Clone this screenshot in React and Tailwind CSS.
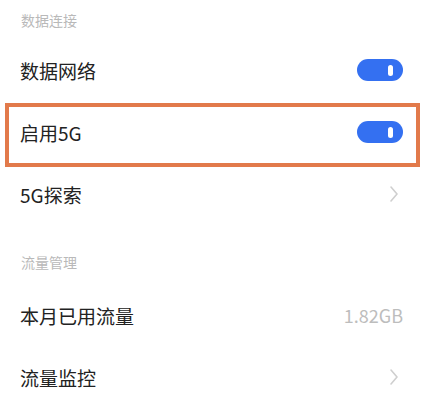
import React from "react";

const font = { fontFamily: '"Noto Sans CJK SC", "Noto Sans", sans-serif' };

function Toggle() {
  return (
    <div className="w-[46px] h-[22px] rounded-full bg-[#3470f1] flex items-center justify-end pr-[10px]">
      <div className="w-[5px] h-[11px] rounded-full bg-white" />
    </div>
  );
}

function Chevron() {
  return (
    <svg width="10" height="18" viewBox="0 0 10 18" className="mr-[4px]">
      <path d="M2 2 L8 9 L2 16" fill="none" stroke="#cfcfcf" strokeWidth="1.6" strokeLinecap="round" strokeLinejoin="round" />
    </svg>
  );
}

function Row({ label, right, highlight }) {
  return (
    <div className="relative h-[62px] flex items-center justify-between pl-[20px] pr-[22px]">
      <span className="text-[19px] text-[#222222] leading-none">{label}</span>
      {right}
      {highlight && (
        <div className="absolute left-[5px] right-[5px] top-[2px] bottom-[-4px] border-[4px] border-[#e27a4b]" />
      )}
    </div>
  );
}

export default function App() {
  return (
    <div className="w-[425px] h-[400px] bg-white overflow-hidden" style={font}>
      <div className="h-[39px] flex items-center pl-[21px]">
        <span className="text-[14px] text-[#b9b9b9] leading-none">数据连接</span>
      </div>
      <Row label="数据网络" right={<Toggle />} />
      <Row label="启用5G" right={<Toggle />} highlight />
      <Row label="5G探索" right={<Chevron />} />
      <div className="h-[59px] pt-[30px] pl-[21px]">
        <span className="text-[14px] text-[#b9b9b9] leading-none block">流量管理</span>
      </div>
      <Row label="本月已用流量" right={<span className="text-[18px] text-[#bdbdbd] leading-none">1.82GB</span>} />
      <Row label="流量监控" right={<Chevron />} />
    </div>
  );
}
